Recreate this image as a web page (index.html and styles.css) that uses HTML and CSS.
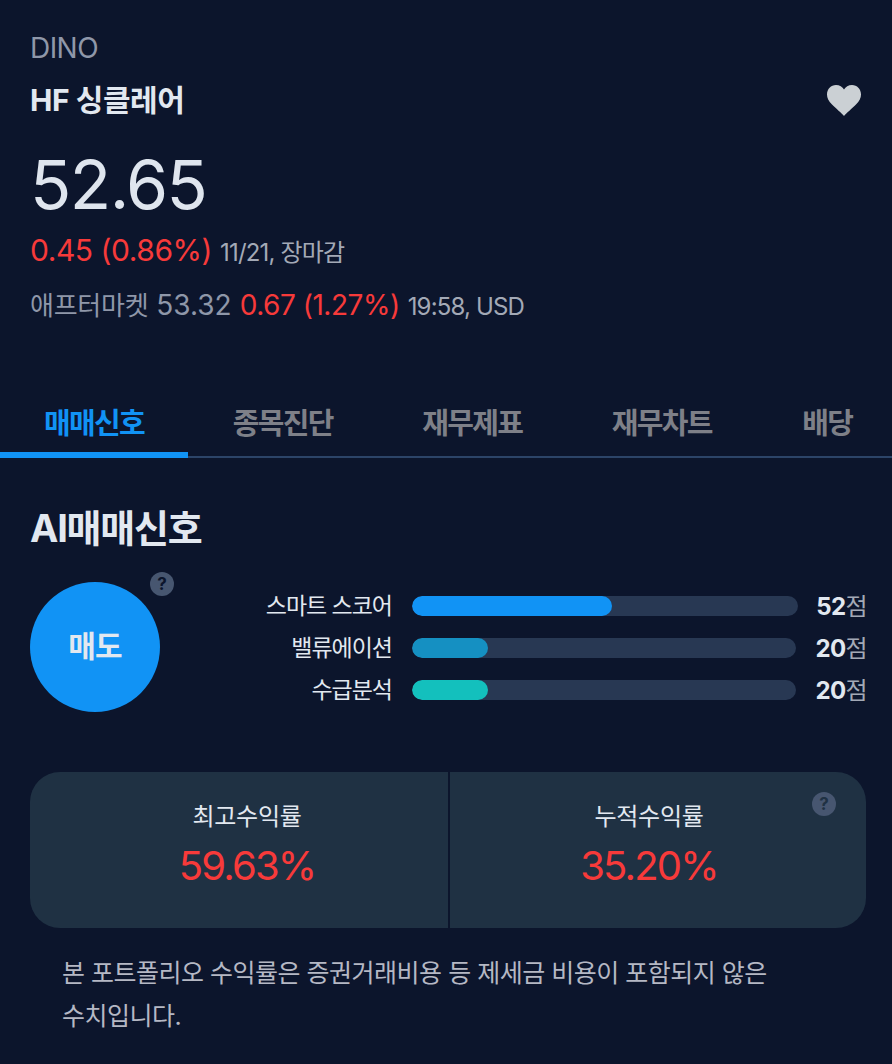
FILE: index.html
```html
<!DOCTYPE html>
<html lang="ko">
<head>
  <meta charset="UTF-8">
  <meta name="viewport" content="width=device-width, initial-scale=1.0">
  <title>HF 싱클레어 - 매매신호</title>
  <link rel="stylesheet" href="styles.css">
</head>
<body>
  <header class="quote">
    <div class="ticker">DINO</div>
    <div class="name-row">
      <h1 class="name">HF 싱클레어</h1>
      <svg class="heart" viewBox="0 0 34 31" aria-hidden="true"><path d="M17 31C14.500 28 9 23.500 5 19.500C1.500 16 0 13 0 9.500C0 4 4 0 9 0C12.500 0 15.500 1.800 17 4.500C18.500 1.800 21.500 0 25 0C30 0 34 4 34 9.500C34 13 32.500 16 29 19.500C25 23.500 19.500 28 17 31Z"/></svg>
    </div>
    <div class="price">52.65</div>
    <div class="change-row">
      <span class="up">0.45 (0.86%)</span>
      <span class="stamp">11/21, 장마감</span>
    </div>
    <div class="after-row">
      <span class="after">애프터마켓</span>
      <span class="after-price">53.32</span>
      <span class="up up-small">0.67 (1.27%)</span>
      <span class="stamp">19:58, USD</span>
    </div>
  </header>

  <nav class="tabs">
    <a class="tab active">매매신호</a>
    <a class="tab">종목진단</a>
    <a class="tab">재무제표</a>
    <a class="tab">재무차트</a>
    <a class="tab tab-last">배당</a>
  </nav>

  <section class="signal">
    <h2 class="signal-title">AI매매신호</h2>
    <div class="signal-body">
      <div class="badge">
        매도
        <span class="help help-badge">?</span>
      </div>
      <div class="scores">
        <div class="score">
          <span class="score-label">스마트 스코어</span>
          <div class="track track-wide"><div class="fill fill-blue" style="width: 51.8%"></div></div>
          <span class="score-value"><b>52</b>점</span>
        </div>
        <div class="score">
          <span class="score-label">밸류에이션</span>
          <div class="track"><div class="fill fill-sea" style="width: 19.8%"></div></div>
          <span class="score-value"><b>20</b>점</span>
        </div>
        <div class="score">
          <span class="score-label">수급분석</span>
          <div class="track"><div class="fill fill-teal" style="width: 19.8%"></div></div>
          <span class="score-value"><b>20</b>점</span>
        </div>
      </div>
    </div>

    <div class="returns">
      <div class="return">
        <div class="return-label">최고수익률</div>
        <div class="return-value">59.63%</div>
      </div>
      <div class="return">
        <div class="return-label">누적수익률</div>
        <div class="return-value">35.20%</div>
        <span class="help help-card">?</span>
      </div>
    </div>

    <p class="note">본 포트폴리오 수익률은 증권거래비용 등 제세금 비용이 포함되지 않은 수치입니다.</p>
  </section>
</body>
</html>
```

FILE: styles.css
```css
* { box-sizing: border-box; }
html, body { height: 100%; }
body { margin: 0; overflow: hidden; background: #0c152c; color: #e2e8f0; font-family: 'Inter', 'Noto Sans CJK KR', sans-serif; letter-spacing: -0.04em; }

.quote { padding: 30px 26px 0 30px; }
.ticker { font-size: 28px; line-height: 36px; color: #8f97a9; letter-spacing: -0.02em; }
.name-row { display: flex; justify-content: space-between; align-items: center; margin-top: 16px; height: 36px; }
.name { margin: 0; font-size: 30px; font-weight: 700; line-height: 36px; color: #e2e8f0; letter-spacing: -0.015em; }
.heart { width: 34px; height: 31px; margin-right: 5px; fill: #cbd0d4; }
.price { margin-top: 24px; font-size: 68px; line-height: 84px; font-weight: 400; color: #dfe5ee; letter-spacing: -0.023em; }
.change-row { display: flex; align-items: baseline; gap: 8px; margin-top: 2px; line-height: 44px; }
.after-row { display: flex; align-items: baseline; gap: 8px; margin-top: 8px; line-height: 44px; }
.up { font-size: 30px; color: #f73a3a; letter-spacing: -0.015em; }
.up-small { font-size: 28px; letter-spacing: -0.017em; }
.stamp { font-size: 24px; color: #a3a9b6; letter-spacing: -0.035em; }
.after { font-size: 26px; color: #8f97a9; letter-spacing: -0.01em; }
.after-price { font-size: 28px; color: #8f97a9; letter-spacing: 0; }

.tabs { display: flex; margin-top: 67px; height: 62px; border-bottom: 2px solid #2c4468; }
.tab { flex: 0 0 189.5px; height: 62px; text-align: center; font-size: 29px; font-weight: 700; line-height: 56px; color: #7e8088; letter-spacing: -0.06em; }
.tab-last { flex: 1 1 auto; padding-left: 6px; }
.tab.active { flex-basis: 188px; color: #1193f5; border-bottom: 6px solid #1193f5; }

.signal { padding: 0 26px 0 30px; }
.signal-title { margin: 44px 0 0; font-size: 38px; font-weight: 700; line-height: 52px; color: #e2e8f0; letter-spacing: -0.032em; }
.signal-body { display: flex; margin-top: 28px; height: 130px; }
.badge { position: relative; flex: none; display: flex; align-items: center; justify-content: center; width: 130px; height: 130px; padding-bottom: 6px; border-radius: 50%; background: #1193f5; font-size: 30px; font-weight: 700; color: #e2e8f0; letter-spacing: -0.03em; }
.help { position: absolute; display: flex; align-items: center; justify-content: center; width: 24px; height: 24px; border-radius: 50%; background: #475670; color: #0c152c; font-size: 17px; font-weight: 700; letter-spacing: 0; }
.help-badge { top: -10px; right: -14px; }
.help-card { top: 20px; right: 30px; color: #1f3143; }

.scores { flex: 1; display: flex; flex-direction: column; gap: 22px; padding-top: 14px; }
.score { display: flex; align-items: center; height: 20px; }
.score-label { flex: none; width: 232px; padding-bottom: 4px; text-align: right; font-size: 23px; color: #e2e8f0; letter-spacing: -0.045em; }
.track { width: 384px; height: 20px; margin-left: 20px; border-radius: 10px; background: #283853; overflow: hidden; }
.track-wide { width: 386px; }
.fill { height: 100%; border-radius: 10px; }
.fill-blue { background: #1193f5; }
.fill-sea { background: #1590c2; }
.fill-teal { background: #13c0bd; }
.score-value { flex: 1; margin-right: -1px; padding-bottom: 4px; text-align: right; font-size: 24px; color: #a3a9b6; }
.score-value b { font-weight: 700; color: #e2e8f0; }

.returns { display: flex; margin-top: 60px; height: 156px; border-radius: 30px; background: #1f3143; }
.return { position: relative; flex: 1; text-align: center; padding: 26px 18px 0 0; }
.return:first-child { flex: 0 0 420px; padding: 26px 0 0 16px; border-right: 2px solid #0c152c; }
.return-label { font-size: 24px; line-height: 38px; color: #e2e8f0; letter-spacing: -0.01em; }
.return-value { margin-top: 4px; font-size: 40px; line-height: 52px; color: #f73a3a; letter-spacing: -0.045em; }

.note { width: 720px; margin: 24px 0 0 32px; font-size: 25px; line-height: 43px; color: #b5b8c4; letter-spacing: -0.02em; }
```
